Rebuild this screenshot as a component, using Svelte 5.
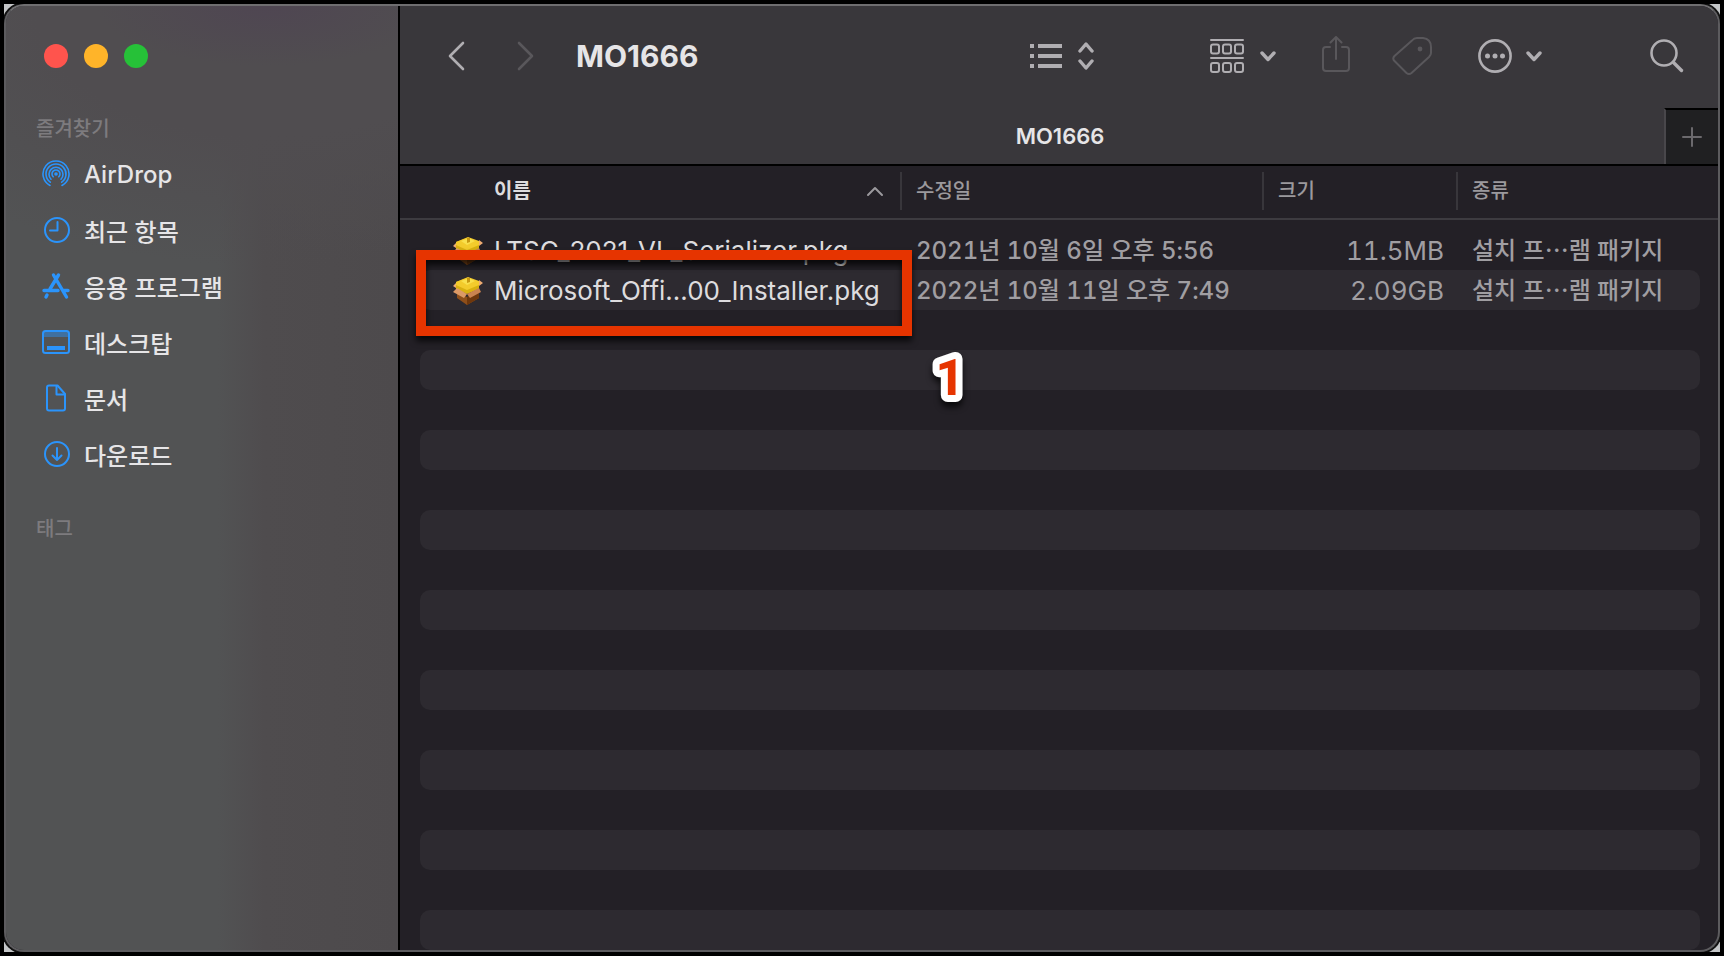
<script>
	const favorites = [
		{ name: "AirDrop", icon: "airdrop" },
		{ name: "최근 항목", icon: "recents" },
		{ name: "응용 프로그램", icon: "apps" },
		{ name: "데스크탑", icon: "desktop" },
		{ name: "문서", icon: "documents" },
		{ name: "다운로드", icon: "downloads" },
	];

	const files = [
		{
			name: "LTSC_2021_VL_Serializer.pkg",
			date: "2021년 10월 6일 오후 5:56",
			size: "11.5MB",
			kind: "설치 프⋯램 패키지",
		},
		{
			name: "Microsoft_Offi...00_Installer.pkg",
			date: "2022년 10월 11일 오후 7:49",
			size: "2.09GB",
			kind: "설치 프⋯램 패키지",
		},
	];

	// striped rows that fill the rest of the list
	const emptyRows = Array(16).fill(0);
</script>

<div class="screen">
	<div class="window">
		<aside>
			<div class="lights">
				<button class="close" aria-label="닫기"></button>
				<button class="minimize" aria-label="최소화"></button>
				<button class="zoom" aria-label="확대"></button>
			</div>
			<nav>
				<h2>즐겨찾기</h2>
				<ul>
					{#each favorites as item}
						<li>
							<a href="#{item.icon}">
								<svg width="28" height="28" viewBox="0 0 28 28">
									{#if item.icon === "airdrop"}
										<g class="thin">
											<path d="M8 25.5A13 13 0 1 1 20 25.5" />
											<path d="M8.3 22.2A10 10 0 1 1 19.7 22.2" />
											<path d="M9 19.2A7 7 0 1 1 19 19.2" />
											<path d="M11.2 16.8A4 4 0 1 1 16.8 16.8" />
										</g>
										<circle class="solid" cx="14" cy="14" r="1.8" />
									{:else if item.icon === "recents"}
										<circle cx="15" cy="14" r="12" />
										<path d="M15.5 6v8.5H8" />
									{:else if item.icon === "apps"}
										<g class="bold">
											<path d="M11.5 3l13 22M16.5 3L8 17M2 18.5h14M21 18.5h5M5 23l-1 2" />
										</g>
									{:else if item.icon === "desktop"}
										<rect x="1" y="3" width="26" height="22" rx="2.5" />
										<path class="solid faint" d="M2 4h24v5H2z" />
										<path class="dock" d="M5 20h18" />
									{:else if item.icon === "documents"}
										<path d="M7 1.5h8.5L23 10v14.5a2 2 0 0 1-2 2H7a2 2 0 0 1-2-2v-21a2 2 0 0 1 2-2z" />
										<path d="M14.5 2v8.5H23" />
									{:else}
										<circle cx="15" cy="14" r="12" />
										<path d="M15 8v12M10.5 15.5L15 20l4.5-4.5" />
									{/if}
								</svg>
								{item.name}
							</a>
						</li>
					{/each}
				</ul>
				<h2>태그</h2>
			</nav>
		</aside>

		<main>
			<header>
				<button aria-label="뒤로">
					<svg width="18" height="32" viewBox="0 0 18 32"><path class="medium" d="M16 3L3 16l13 13" /></svg>
				</button>
				<button class="dim forward" aria-label="앞으로">
					<svg width="18" height="32" viewBox="0 0 18 32"><path class="medium" d="M2 3l13 13L2 29" /></svg>
				</button>
				<h1>MO1666</h1>

				<div class="tools">
					<button class="view" aria-label="목록 보기">
						<svg width="32" height="28" viewBox="0 0 32 28">
							<path class="bars" d="M0 4h4M0 14h4M0 24h4M8 4h24M8 14h24M8 24h24" />
						</svg>
						<svg width="16" height="28" viewBox="0 0 16 28">
							<path class="bold" d="M2 9l6-7 6 7M2 19l6 7 6-7" />
						</svg>
					</button>
					<button class="group" aria-label="그룹">
						<svg width="34" height="36" viewBox="0 0 34 36">
							<path d="M1 2h32M1 20h32" />
							<rect x="1" y="6.5" width="8" height="9" rx="2" />
							<rect x="13" y="6.5" width="8" height="9" rx="2" />
							<rect x="25" y="6.5" width="8" height="9" rx="2" />
							<rect x="1" y="25" width="8" height="9" rx="2" />
							<rect x="13" y="25" width="8" height="9" rx="2" />
							<rect x="25" y="25" width="8" height="9" rx="2" />
						</svg>
						<svg width="16" height="12" viewBox="0 0 16 12"><path class="bold" d="M2 3l6 6.5L14 3" /></svg>
					</button>
					<button class="dim" aria-label="공유">
						<svg width="28" height="40" viewBox="0 0 28 40">
							<path d="M8 11H4a3 3 0 0 0-3 3v18a3 3 0 0 0 3 3h20a3 3 0 0 0 3-3V14a3 3 0 0 0-3-3h-4M14 23V1M8.5 6.5L14 1l5.5 5.5" />
						</svg>
					</button>
					<button class="dim tag" aria-label="태그 편집">
						<svg width="40" height="40" viewBox="0 0 40 40">
							<path d="M20 4.5Q22 2 25 2h6q8 1 8 9v6q0 2-2 4L19.5 37q-2.5 2-5 0L2.5 25q-2.5-2.5 0-5z" />
							<circle class="solid" cx="28" cy="13" r="2.4" />
						</svg>
					</button>
					<button class="more" aria-label="동작">
						<svg width="34" height="34" viewBox="0 0 34 34">
							<circle class="medium" cx="17" cy="17" r="15.6" />
							<g class="solid">
								<circle cx="9.5" cy="17" r="2.5" />
								<circle cx="17" cy="17" r="2.5" />
								<circle cx="24.5" cy="17" r="2.5" />
							</g>
						</svg>
						<svg width="16" height="12" viewBox="0 0 16 12"><path class="bold" d="M2 3l6 6.5L14 3" /></svg>
					</button>
					<button class="search" aria-label="검색">
						<svg width="34" height="34" viewBox="0 0 34 34">
							<circle class="medium" cx="14" cy="14" r="12.5" />
							<path class="bold" d="M23.5 23.5L31.5 31.5" />
						</svg>
					</button>
				</div>
			</header>

			<div class="tabs">
				<div class="tab">MO1666</div>
				<button class="add" aria-label="새로운 탭">
					<svg width="20" height="20" viewBox="0 0 20 20"><path d="M10 1v18M1 10h18" /></svg>
				</button>
			</div>

			<div class="list">
				<table>
					<colgroup>
						<col class="c-name" />
						<col class="c-date" />
						<col class="c-size" />
						<col />
					</colgroup>
					<thead>
						<tr>
							<th class="sorted">
								<div>
									이름
									<svg width="18" height="12" viewBox="0 0 18 12"><path d="M2 10l7-7 7 7" /></svg>
								</div>
							</th>
							<th><div>수정일</div></th>
							<th><div>크기</div></th>
							<th><div>종류</div></th>
						</tr>
					</thead>
					<tbody>
						{#each files as file}
							<tr>
								<td class="name">
									<div>
										<svg class="pkg" width="30" height="30" viewBox="0 0 30 30">
											<path fill="#8f4f1a" d="M4 16l10 5 12-5v6l-12 7-10-7z" />
											<path fill="#6e370c" d="M14 21l12-5v6l-12 7z" />
											<path fill="#d9b010" d="M3 6l11-4 12 4v7l-12 5-11-5z" />
											<path fill="#f3cb2c" d="M3 6l12-5 11 4v4l-12 5-11-5z" />
											<path fill="#f9e04c" d="M8 5l8-3 6 3-8 4z" />
											<path fill="#c99a10" d="M14 2h3v4l-3 1z" />
											<path fill="#dd9a66" d="M4 12l10 6-3 4-11-6z" />
											<path fill="#c98350" d="M26 12l-12 6 3 4 11-6z" />
											<path fill="#efac72" d="M3 7L0 10l3 2zM26 4l4 3-4 3z" />
										</svg>
										{file.name}
									</div>
								</td>
								<td class="date">{file.date}</td>
								<td class="size">{file.size}</td>
								<td>{file.kind}</td>
							</tr>
						{/each}
						{#each emptyRows as _}
							<tr><td></td><td></td><td></td><td></td></tr>
						{/each}
					</tbody>
				</table>
				<div class="highlight"></div>
				<svg class="step" width="60" height="80" viewBox="0 0 60 80">
					<text x="30" y="55" text-anchor="middle">1</text>
				</svg>
			</div>
		</main>
	</div>
</div>

<style>
	:global(body) {
		background: #000;
	}
	.screen {
		box-sizing: border-box;
		height: 100vh;
		border: 4px solid #000;
		background: #c4c6c8;
		overflow: hidden;
		font-family: Inter, "Noto Sans CJK KR", sans-serif;
		color: #e6e5e7;
	}
	.window {
		display: flex;
		box-sizing: border-box;
		height: 100%;
		border: 2px solid #5c5b5e;
		border-top-color: #6f6e70;
		border-radius: 20px;
		box-shadow: 0 0 0 2px #111;
		background: #232026;
		overflow: hidden;
	}
	svg {
		display: block;
		flex: none;
		fill: none;
		stroke: currentColor;
		stroke-width: 2;
		stroke-linecap: round;
		stroke-linejoin: round;
	}
	.thin {
		stroke-width: 1.6;
	}
	.medium {
		stroke-width: 2.6;
	}
	.bold {
		stroke-width: 3.4;
	}
	.bars,
	.dock {
		stroke-width: 4;
		stroke-linecap: butt;
	}
	.solid {
		fill: currentColor;
		stroke: none;
	}
	.faint {
		opacity: 0.45;
	}
	button {
		display: flex;
		align-items: center;
		padding: 0;
		border: 0;
		background: none;
		color: #b0aeb2;
		font: inherit;
	}

	aside {
		box-sizing: border-box;
		flex: none;
		width: 394px;
		border-right: 2px solid #000;
		background:
			radial-gradient(ellipse 170px 60px at 260px 0, #4f4652, transparent),
			radial-gradient(ellipse 460px 260px at 260px 0, #504d50 50%, transparent),
			linear-gradient(90deg, #525354 54%, #4f4c4e 66%, #4d4a4c);
	}
	.lights {
		display: flex;
		gap: 16px;
		padding: 38px 38px 44px;
	}
	.lights button {
		width: 24px;
		height: 24px;
		border-radius: 50%;
	}
	.lights .close {
		background: #ff544d;
	}
	.lights .minimize {
		background: #ffb429;
	}
	.lights .zoom {
		background: #26c138;
	}
	h2 {
		margin: 0;
		padding: 0 30px;
		font-size: 20px;
		font-weight: 500;
		line-height: 34px;
		color: #7d7b7e;
	}
	ul {
		margin: 0 0 30px;
		padding: 0;
		list-style: none;
	}
	a {
		display: flex;
		align-items: center;
		gap: 14px;
		height: 56px;
		padding: 0 36px;
		font-size: 24px;
		font-weight: 500;
		color: #e6e5e7;
		text-decoration: none;
	}
	a svg {
		color: #2b94fb;
	}

	main {
		display: flex;
		flex-direction: column;
		flex: 1;
		min-width: 0;
	}
	header {
		display: flex;
		align-items: center;
		height: 102px;
		padding: 0 34px 2px 47px;
		box-sizing: border-box;
		background: #39373b;
	}
	.forward {
		margin-left: 52px;
	}
	header .dim {
		color: #59575b;
	}
	h1 {
		margin: 0 0 0 41px;
		font-size: 30px;
		font-weight: 700;
		line-height: 36px;
	}
	.tools {
		display: flex;
		align-items: center;
		margin-left: auto;
	}
	.view {
		gap: 16px;
		margin-right: 116px;
	}
	.group {
		gap: 16px;
		margin-right: 46px;
	}
	.tag {
		margin: 0 46px 0 42px;
	}
	.more {
		gap: 14px;
		margin-right: 108px;
	}

	.tabs {
		display: flex;
		height: 56px;
		border-bottom: 2px solid #000;
		background: #39373b;
	}
	.tab {
		flex: 1;
		padding-left: 56px;
		font-size: 22px;
		font-weight: 600;
		line-height: 56px;
		text-align: center;
	}
	.add {
		justify-content: center;
		box-sizing: border-box;
		width: 54px;
		border-top: 2px solid #000;
		border-left: 2px solid #49474b;
		background: #202022;
		color: #6b696d;
	}

	.list {
		position: relative;
		flex: 1;
		min-height: 0;
		padding: 0 18px 0 20px;
		/* the rule under the column titles runs the full width */
		background: linear-gradient(#3d3b40, #3d3b40) 0 52px / 100% 2px no-repeat;
	}
	table {
		width: 100%;
		table-layout: fixed;
		border-spacing: 0;
	}
	.c-name {
		width: 482px;
	}
	.c-date {
		width: 362px;
	}
	.c-size {
		width: 194px;
	}
	th {
		height: 54px;
		padding: 0;
		text-align: left;
		font-size: 20px;
		font-weight: 500;
		line-height: 38px;
		color: #9b999d;
	}
	th div {
		height: 38px;
		margin-bottom: 4px;
		padding-left: 14px;
		border-right: 2px solid #38363b;
	}
	th:last-child div {
		border-right: 0;
	}
	.sorted div {
		display: flex;
		align-items: center;
		justify-content: space-between;
		padding: 0 16px 0 74px;
		font-weight: 700;
		color: #dddcde;
	}
	.sorted svg {
		color: #9b999d;
	}
	tbody::before {
		content: "";
		display: block;
		height: 10px;
	}
	td {
		box-sizing: border-box;
		height: 40px;
		padding: 2px 0 0 14px;
		font-size: 24px;
		font-weight: 500;
		line-height: 38px;
		white-space: nowrap;
		color: #a09ea2;
	}
	tbody tr:nth-child(even) td {
		background: #2d2a30;
	}
	td:first-child {
		border-radius: 10px 0 0 10px;
	}
	td:last-child {
		border-radius: 0 10px 10px 0;
	}
	.name {
		padding-left: 33px;
		font-size: 26px;
		font-weight: 400;
		color: #dddcde;
	}
	.name div {
		display: flex;
		align-items: center;
		gap: 11px;
	}
	.pkg {
		stroke: none;
	}
	.date {
		font-variant-numeric: tabular-nums;
	}
	.size {
		padding: 2px 14px 0 0;
		font-size: 26px;
		font-weight: 400;
		font-variant-numeric: tabular-nums;
		text-align: right;
	}

	.highlight {
		position: absolute;
		top: 84px;
		left: 16px;
		box-sizing: border-box;
		width: 496px;
		height: 86px;
		border: 10px solid #e63400;
		filter: drop-shadow(0 5px 3px rgba(0, 0, 0, 0.75));
	}
	.step {
		position: absolute;
		top: 174px;
		left: 520px;
		filter: drop-shadow(0 5px 3px rgba(0, 0, 0, 0.75));
	}
	.step text {
		font-family: Roboto, sans-serif;
		font-size: 50px;
		font-weight: 800;
		fill: #e63400;
		stroke: #fff;
		stroke-width: 14;
		paint-order: stroke;
	}
</style>
